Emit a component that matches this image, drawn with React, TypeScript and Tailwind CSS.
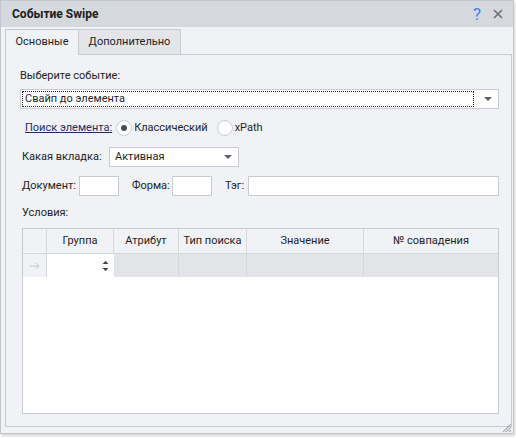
import React from "react";

const F = { fontFamily: 'Roboto, "Liberation Sans", Arial, sans-serif' };

function Arrow() {
  return (
    <svg width="8" height="4" viewBox="0 0 8 4" className="shrink-0">
      <path d="M0 0 L8 0 L4 4 Z" fill="#5b5f66" />
    </svg>
  );
}

function Radio({ checked, label }: { checked?: boolean; label: string }) {
  return (
    <div className="flex items-center gap-[2px] whitespace-nowrap">
      <div className="w-[16px] h-[16px] rounded-full border border-[#c9cdd3] bg-white flex items-center justify-center shrink-0">
        {checked && <div className="w-[6px] h-[6px] rounded-full bg-[#4a4d52]" />}
      </div>
      <span>{label}</span>
    </div>
  );
}

export default function App() {
  return (
    <div className="w-[516px] h-[438px] bg-white text-[11px] text-[#1e1e1e] whitespace-nowrap" style={F}>
      <div className="w-[514px] h-[434px] border border-[#c3c7cd] bg-[#f0f2f6] flex flex-col shadow-[1px_2px_3px_rgba(0,0,0,0.18)]">
        {/* title */}
        <div className="h-[26px] bg-[#d5d8dd] flex items-center pl-[11px] pr-[10px] shrink-0">
          <span className="font-bold text-[12px] text-[#1b1b1b]">Событие Swipe</span>
          <div className="flex-1" />
          <span className="text-[#3b82f6] text-[17px] leading-none mr-[12px]">?</span>
          <svg width="10" height="10" viewBox="0 0 10 10">
            <path d="M1 1 L9 9 M9 1 L1 9" stroke="#6b6f76" strokeWidth="1.6" />
          </svg>
        </div>
        {/* tabs */}
        <div className="h-[27px] flex items-end pl-[4px] shrink-0">
          <div className="h-[26px] w-[74px] border border-b-0 border-[#c8ccd2] bg-[#f0f2f6] flex items-center justify-center relative top-[1px] z-10">
            Основные
          </div>
          <div className="h-[25px] w-[102px] border border-l-0 border-b-0 border-[#c8ccd2] bg-[#e3e5e9] flex items-center justify-center">
            Дополнительно
          </div>
        </div>
        {/* panel */}
        <div className="ml-[4px] mr-[1px] h-[373px] border border-[#c8ccd2] bg-[#f0f2f6] flex flex-col pl-[14px] pr-[12px] relative">
          <div className="h-[14px] mt-[14px] flex items-center">Выберите событие:</div>
          <div className="mt-[6px] h-[20px] bg-white border border-[#c8ccd2] flex items-center pl-[1px] pr-[6px]">
            <div className="flex-1 h-[16px] border border-dotted border-[#222] flex items-center pl-[2px]">
              Свайп до элемента
            </div>
            <div className="w-[18px] flex justify-end">
              <Arrow />
            </div>
          </div>
          <div className="mt-[10px] h-[18px] flex items-center pl-[5px] gap-[4px]">
            <span className="underline text-[#1f2d5c]">Поиск элемента:</span>
            <Radio checked label="Классический" />
            <div className="w-[1px]" />
            <Radio label="xPath" />
          </div>
          <div className="mt-[10px] h-[20px] flex items-center pl-[2px]">
            <span className="w-[87px] shrink-0">Какая вкладка:</span>
            <div className="w-[130px] h-[20px] bg-white border border-[#c8ccd2] flex items-center pl-[5px] pr-[6px]">
              <span className="flex-1">Активная</span>
              <Arrow />
            </div>
          </div>
          <div className="mt-[9px] h-[20px] flex items-center pl-[2px]">
            <span className="w-[57px] shrink-0">Документ:</span>
            <div className="w-[40px] h-[20px] bg-white border border-[#c8ccd2] shrink-0" />
            <span className="ml-[13px] w-[40px] shrink-0">Форма:</span>
            <div className="w-[40px] h-[20px] bg-white border border-[#c8ccd2] shrink-0" />
            <span className="ml-[13px] w-[23px] shrink-0">Тэг:</span>
            <div className="flex-1 h-[20px] bg-white border border-[#c8ccd2]" />
          </div>
          <div className="mt-[10px] h-[14px] flex items-center pl-[2px]">Условия:</div>
          <div className="mt-[8px] ml-[2px] h-[186px] border border-[#c8ccd2] bg-white flex flex-col">
            <div className="h-[25px] flex bg-[#f0f2f6] border-b border-[#d4d7dc] shrink-0">
              <div className="w-[24px] border-r border-[#d4d7dc]" />
              <div className="w-[67px] border-r border-[#d4d7dc] flex items-center justify-center">Группа</div>
              <div className="w-[65px] border-r border-[#d4d7dc] flex items-center justify-center">Атрибут</div>
              <div className="w-[68px] border-r border-[#d4d7dc] flex items-center justify-center">Тип поиска</div>
              <div className="w-[117px] border-r border-[#d4d7dc] flex items-center justify-center">Значение</div>
              <div className="flex-1 flex items-center justify-center">№ совпадения</div>
            </div>
            <div className="h-[23px] flex shrink-0">
              <div className="w-[24px] bg-[#f0f2f6] border-r border-[#d4d7dc] flex items-center justify-center">
                <svg width="10" height="8" viewBox="0 0 10 8">
                  <path d="M0 4 H9 M6 1 L9 4 L6 7" stroke="#c3c6cc" strokeWidth="1" fill="none" />
                </svg>
              </div>
              <div className="w-[67px] bg-white flex items-center justify-end pr-[5px]">
                <svg width="7" height="14" viewBox="0 0 7 14">
                  <path d="M0.5 5 L3.5 2 L6.5 5 Z M0.5 9 L3.5 12 L6.5 9 Z" fill="#3f4247" />
                </svg>
              </div>
              <div className="w-[65px] bg-[#e3e4e7] border-r border-[#d4d7dc]" />
              <div className="w-[68px] bg-[#e3e4e7] border-r border-[#d4d7dc]" />
              <div className="w-[117px] bg-[#e3e4e7] border-r border-[#d4d7dc]" />
              <div className="flex-1 bg-[#e3e4e7]" />
            </div>
            <div className="flex-1 bg-white" />
          </div>
        </div>
        <div className="flex-1 relative">
          <svg width="12" height="12" viewBox="0 0 12 12" className="absolute right-[1px] bottom-[0px]">
            <path d="M11 3 L3 11 M11 6 L6 11 M11 9 L9 11" stroke="#a9adb3" strokeWidth="1.2" />
          </svg>
        </div>
      </div>
    </div>
  );
}
